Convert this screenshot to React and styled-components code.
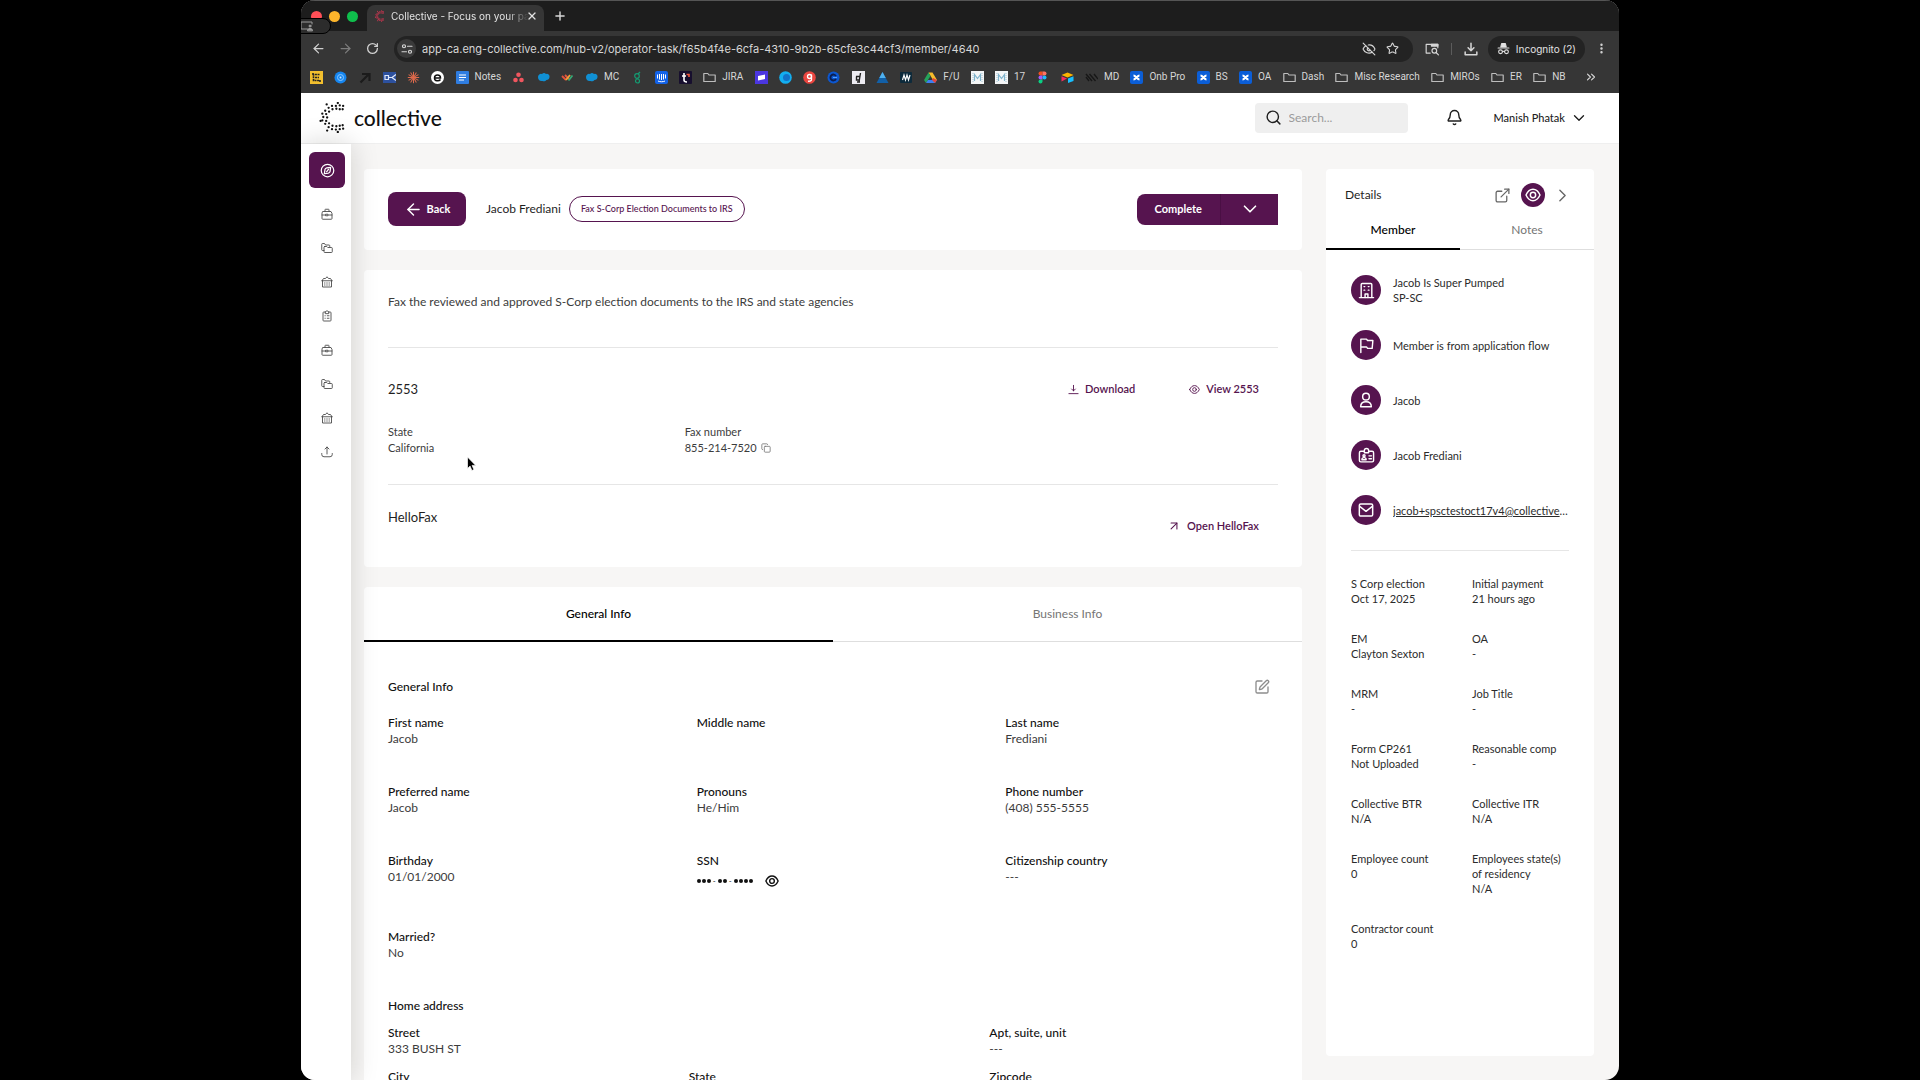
import React, { useState } from "react";
import styled, { createGlobalStyle } from "styled-components";
import {
  ArrowLeft,
  ArrowRight,
  ArrowUpRight,
  Bell,
  ChevronDown,
  ChevronRight,
  ChevronsRight,
  Copy,
  EllipsisVertical,
  ExternalLink,
  EyeOff,
  Plus,
  RotateCw,
  Search,
  SquarePen,
  Star,
  X,
} from "lucide-react";

const PURPLE = "#56144f";

const GlobalStyle = createGlobalStyle`
  * {
    box-sizing: border-box;
  }

  body {
    margin: 0;
    background: #000;
    color: #1f1f1f;
    font-family: Lato, "Liberation Sans", sans-serif;
    font-size: 12px;
    line-height: 16px;
  }

  button,
  input {
    margin: 0;
    padding: 0;
    border: 0;
    background: none;
    color: inherit;
    font: inherit;
  }

  button {
    display: flex;
    align-items: center;
    cursor: pointer;
  }

  a {
    color: inherit;
    text-decoration: none;
  }

  svg {
    display: block;
    flex: none;
  }

  h1, h2, h3, p, dl, dd {
    margin: 0;
    font-size: inherit;
    font-weight: inherit;
  }
`;

const Desktop = styled.div`
  height: 100vh;
  padding: 0 301px;
  overflow: hidden;
`;

const Window = styled.div`
  position: relative;
  display: flex;
  flex-direction: column;
  height: 100%;
  border-radius: 14px;
  overflow: hidden;
  background: #f7f6f5;
`;

/* browser chrome */

const Chrome = styled.div`
  background: #363636;
  color: #d6d6d6;
  font-family: Inter, "Liberation Sans", sans-serif;
  font-size: 10px;
`;

const TabStrip = styled.div`
  display: flex;
  align-items: flex-end;
  height: 31px;
  padding-left: 10px;
  border-top: 1px solid #555;
  background: #1d1d1d;
`;

const Lights = styled.div`
  display: flex;
  align-items: center;
  gap: 7px;
  height: 30px;
  width: 56px;
`;

const Light = styled.span`
  width: 11px;
  height: 11px;
  border-radius: 50%;
  background: ${(p) => p.$color};
`;

const BrowserTab = styled.div`
  display: flex;
  align-items: center;
  width: 177px;
  height: 26px;
  padding: 0 6px 5px 8px;
  border-radius: 8px 8px 0 0;
  background: #363636;
  color: #e2e2e2;
`;

const TabTitle = styled.span`
  flex: 1;
  min-width: 0;
  margin: 0 -3px 0 7px;
  white-space: nowrap;
  mask-image: linear-gradient(to right, #000 84%, transparent);
`;

const NewTab = styled.button`
  height: 26px;
  margin-left: 9px;
  padding-bottom: 5px;
`;

const Toolbar = styled.div`
  display: flex;
  align-items: center;
  height: 35px;
  padding: 0 11px 0 10px;
`;

const NavButton = styled.button`
  justify-content: center;
  width: 14px;
  margin-right: 13px;
  color: ${(p) => (p.$dim ? "#7c7c7c" : "#cfcfcf")};
`;

const AddressBar = styled.div`
  display: flex;
  align-items: center;
  flex: 1;
  gap: 10px;
  height: 26px;
  margin-left: 2px;
  padding: 0 14px 0 3px;
  border-radius: 13px;
  background: #232323;
`;

const SiteInfo = styled.button`
  justify-content: center;
  width: 19px;
  height: 19px;
  border-radius: 50%;
  background: #3a3a3a;
`;

const Address = styled.input`
  flex: 1;
  min-width: 0;
  margin-left: -4px;
  outline: none;
  font-size: 11px;
`;

const ToolButtons = styled.div`
  display: flex;
  align-items: center;
  gap: 12px;
  margin-left: 12px;
`;

const ToolDivider = styled.span`
  width: 1px;
  height: 12px;
  background: #5c5c5c;
`;

const Incognito = styled.button`
  gap: 6px;
  height: 26px;
  margin: 0 -2px;
  padding: 0 9px;
  border-radius: 13px;
  background: #232323;
  color: #e2e2e2;
`;

const Bookmarks = styled.div`
  display: flex;
  align-items: center;
  height: 27px;
  padding: 0 21px 5px 9px;
  font-family: Roboto, "Liberation Sans", sans-serif;
`;

const BookmarkList = styled.div`
  display: flex;
  align-items: center;
  justify-content: space-between;
  flex: 1;
  margin-right: 18px;
`;

const Bookmark = styled.a`
  display: flex;
  align-items: center;
  gap: 6px;
  white-space: nowrap;
`;

/* app */

const Header = styled.header`
  display: flex;
  align-items: center;
  height: 51px;
  padding: 0 31px 1px 18px;
  border-bottom: 1px solid #efefef;
  background: #fff;
`;

const Brand = styled.a`
  display: flex;
  align-items: center;
  gap: 9px;
  margin-right: auto;
  color: #111;
  font-size: 21px;
  font-weight: 500;
`;

const SearchBox = styled.label`
  display: flex;
  align-items: center;
  gap: 7px;
  width: 153px;
  height: 30px;
  padding: 0 10px;
  border-radius: 4px;
  background: #efefef;

  input {
    width: 100%;
    min-width: 0;
    outline: none;
    font-size: 12px;
  }

  input::placeholder {
    color: #9b9b9b;
  }
`;

const BellButton = styled.button`
  margin: 0 31px 0 38px;
`;

const UserMenu = styled.button`
  gap: 5px;
  font-size: 11px;
  font-weight: 500;
`;

const Body = styled.div`
  display: flex;
  flex: 1;
  min-height: 0;
`;

const SideNav = styled.nav`
  position: relative;
  z-index: 1;
  display: flex;
  flex-direction: column;
  align-items: center;
  width: 50px;
  padding: 8px 0 8px 2px;
  background: #fff;
  box-shadow: 0 0 28px rgba(20, 20, 0, 0.17);
`;

const NavLink = styled.a`
  display: flex;
  align-items: center;
  justify-content: center;
  width: 34px;
  height: 34px;
  color: #4b4b4b;
`;

const ActiveNavLink = styled(NavLink)`
  width: 36px;
  height: 36px;
  margin-bottom: 9px;
  border-radius: 6px;
  background: ${PURPLE};
  color: #fff;
`;

const Content = styled.div`
  display: flex;
  align-items: flex-start;
  flex: 1;
  gap: 24px;
  min-width: 0;
  padding: 25px 25px 0 13px;
  overflow: hidden;
`;

const Main = styled.main`
  display: flex;
  flex-direction: column;
  flex: 1;
  gap: 20px;
  min-width: 0;
`;

const Card = styled.section`
  border-radius: 4px;
  background: #fff;
`;

const TaskBar = styled(Card)`
  display: flex;
  align-items: center;
  height: 81px;
  padding: 0 24px 1px;
`;

const BackButton = styled.button`
  justify-content: center;
  gap: 4px;
  width: 78px;
  height: 34px;
  margin-right: 20px;
  border-radius: 8px;
  background: ${PURPLE};
  color: #fff;
  font-size: 11px;
  font-weight: 700;
`;

const TaskTag = styled.span`
  margin: 0 auto 0 8px;
  padding: 4px 11px;
  border: 1px solid ${PURPLE};
  border-radius: 13px;
  color: ${PURPLE};
  font-size: 9px;
  font-weight: 500;
`;

const SplitButton = styled.div`
  display: flex;
  height: 31px;
  border-radius: 8px 0 0 8px;
  overflow: hidden;
  background: ${PURPLE};
  color: #fff;
`;

const CompleteButton = styled.button`
  padding: 0 18px;
  border-right: 1px solid #4a0f44;
  font-size: 11px;
  font-weight: 700;
`;

const MoreButton = styled.button`
  justify-content: center;
  width: 57px;
`;

const TaskCard = styled(Card)`
  padding: 0 24px;
  color: #3c3c3c;
`;

const TaskSection = styled.div`
  min-height: ${(p) => p.$height}px;
  padding-top: 24px;

  & + & {
    border-top: 1px solid #e6e6e6;
  }
`;

const SectionHead = styled.div`
  display: flex;
  align-items: ${(p) => p.$align || "center"};
  justify-content: space-between;
  color: #1f1f1f;
  font-size: 13px;
`;

const Actions = styled.div`
  display: flex;
  gap: 16px;
`;

const TextButton = styled.button`
  gap: 6px;
  padding: 9px 19px;
  color: ${PURPLE};
  font-size: 11px;
  font-weight: 600;
`;

const FaxGrid = styled.dl`
  display: grid;
  grid-template-columns: repeat(3, 1fr);
  margin-top: 18px;
  font-size: 11px;
`;

const FaxNumber = styled.dd`
  display: flex;
  align-items: center;
  gap: 4px;
`;

const Tabs = styled.div`
  display: flex;
  border-bottom: 1px solid #dedede;
`;

const Tab = styled.button`
  flex: 1;
  justify-content: center;
  height: ${(p) => p.$height}px;
  margin-bottom: -1px;
  border-bottom: 2px solid ${(p) => (p.$active ? "#000" : "transparent")};
  color: ${(p) => (p.$active ? "#000" : "#757575")};
  font-weight: ${(p) => (p.$active ? 500 : 400)};
`;

const PanelTab = styled(Tab)`
  padding-bottom: 3px;
`;

const InfoBody = styled.div`
  padding: 37px 24px 0;
`;

const InfoHead = styled.div`
  display: flex;
  align-items: center;
  justify-content: space-between;
  padding-right: 8px;
  margin-bottom: 20px;
  color: #111;
  font-weight: 500;
`;

const FieldGrid = styled.dl`
  display: grid;
  grid-template-columns: repeat(3, 1fr);
  gap: ${(p) => p.$gap};

  dt {
    color: #111;
    font-weight: 500;
  }

  dd {
    min-height: 16px;
    color: #3c3c3c;
  }
`;

const AddressTitle = styled.h3`
  margin: 37px 0 11px;
  color: #111;
  font-weight: 500;
`;

const Ssn = styled.span`
  display: flex;
  align-items: center;
  gap: 12px;
  height: 23px;
  color: #111;
`;

const Dots = styled.span`
  display: flex;
  align-items: center;
  gap: 2px;
  font-size: 8px;
`;

const DotGroup = styled.span`
  display: flex;
  gap: 1px;
`;

const Dot = styled.i`
  width: 4px;
  height: 4px;
  border-radius: 50%;
  background: #111;
`;

const Details = styled.aside`
  display: flex;
  flex-direction: column;
  align-self: stretch;
  width: 268px;
  margin-bottom: 24px;
  border-radius: 4px;
  background: #fff;
  color: #2b2b2b;
`;

const DetailsHead = styled.div`
  display: flex;
  align-items: center;
  height: 45px;
  padding: 7px 21px 0 19px;
  color: #1f1f1f;
`;

const DetailsTitle = styled.h2`
  flex: 1;
`;

const IconButton = styled.button`
  color: #666;
`;

const RoundButton = styled.button`
  justify-content: center;
  width: 24px;
  height: 24px;
  margin: 0 7px 0 10px;
  border-radius: 50%;
  background: ${PURPLE};
  color: #fff;
`;

const People = styled.ul`
  display: flex;
  flex-direction: column;
  gap: 25px;
  margin: 0 25px;
  padding: 25px 0;
  border-bottom: 1px solid #e6e6e6;
  list-style: none;
  font-size: 11px;
  line-height: 15px;
`;

const Person = styled.li`
  display: flex;
  align-items: center;
  gap: 12px;
  height: 30px;
`;

const Badge = styled.span`
  display: flex;
  align-items: center;
  justify-content: center;
  flex: none;
  width: 30px;
  height: 30px;
  border-radius: 50%;
  background: ${PURPLE};
  color: #fff;
`;

const Email = styled.a`
  overflow: hidden;
  text-overflow: ellipsis;
  white-space: nowrap;
  text-decoration: underline;
`;

const Facts = styled.dl`
  display: grid;
  grid-template-columns: 1fr 1fr;
  gap: 25px 24px;
  padding: 25px;
  font-size: 11px;
  line-height: 15px;
`;

/* overlays */

const ShareBadge = styled.div`
  position: absolute;
  top: 18px;
  left: -10px;
  display: flex;
  align-items: center;
  justify-content: flex-end;
  width: 40px;
  height: 16px;
  padding-right: 17px;
  border: 1px solid #000;
  border-radius: 8px;
  background: #2c2c2c;
  color: #9b9b9b;
`;

const Cursor = styled.svg`
  position: absolute;
  top: 456px;
  left: 165px;
  z-index: 2;
`;

/* drawings */

const Glyph = ({ size = 12, sw = 2, children }) => (
  <svg
    width={size}
    height={size}
    viewBox="0 0 24 24"
    fill="none"
    stroke="currentColor"
    strokeWidth={sw}
    strokeLinecap="round"
    strokeLinejoin="round"
  >
    {children}
  </svg>
);

const LOGO_DOTS = [
  [19, 1], [7.5, 2.5], [13, 4], [17, 4], [21, 3.5], [24.5, 4],
  [9.5, 6], [13.5, 7.5], [17.5, 7], [21, 7.5], [24, 7.5],
  [6, 9], [10, 10], [3, 12], [7, 12.5], [4, 15.5], [8, 16],
  [3, 19], [7, 19.5], [1.2, 19.5], [6, 22.5], [10, 22],
  [9.5, 26], [13.5, 24.5], [17.5, 25], [21, 24.5], [24, 24],
  [13, 28], [17, 28.5], [21, 28], [24.5, 27.5], [8, 29.5], [19, 31],
];

const LogoMark = ({ size, color, dot }) => (
  <svg width={size - 5} height={size} viewBox="0 0 26 32">
    {LOGO_DOTS.map(([x, y]) => (
      <circle key={x + "-" + y} cx={x} cy={y} r={dot} fill={color} />
    ))}
  </svg>
);

const EyeIcon = ({ size, sw }) => (
  <Glyph size={size} sw={sw}>
    <path d="M1.5 12C4 6.500 7.500 3.500 12 3.500s8 3 10.500 8.500C20 17.500 16.500 20.500 12 20.500S4 17.500 1.500 12z" />
    <circle cx="12" cy="12" r="4" />
  </Glyph>
);

const DownloadIcon = ({ size, sw }) => (
  <Glyph size={size} sw={sw}>
    <path d="M12 3v12M8 11l4 4 4-4M2 21h20" />
  </Glyph>
);

const CompassIcon = () => (
  <Glyph size={15} sw={2}>
    <circle cx="12" cy="12" r="10" />
    <path d="M17 7l-1 7c-1 2-5 3-9 3l1-7c1-2 5-3 9-3z" />
    <path d="M13.500 10l-3 4" />
  </Glyph>
);

const CaseIcon = () => (
  <Glyph size={12} sw={1.8}>
    <path d="M8 7V3.500a1 1 0 0 1 1-1h6a1 1 0 0 1 1 1V7" />
    <path d="M4 7h16l2 4v10a1.500 1.500 0 0 1-1.500 1.500h-17A1.500 1.500 0 0 1 2 21V11z" />
    <path d="M2 14h7M15 14h7M10 12.500h4v3h-4z" />
  </Glyph>
);

const FoldersIcon = () => (
  <Glyph size={12} sw={1.8}>
    <path d="M6 17H3a1.500 1.500 0 0 1-1.500-1.500v-11A1.500 1.500 0 0 1 3 3h4l2 3h7a1.500 1.500 0 0 1 1.500 1.500V9" />
    <path d="M7.500 9h4l2 2h7.500a1.500 1.500 0 0 1 1.500 1.500v7A1.500 1.500 0 0 1 21 21H7.500A1.500 1.500 0 0 1 6 19.500v-9A1.500 1.500 0 0 1 7.500 9z" />
  </Glyph>
);

const BankIcon = () => (
  <Glyph size={12} sw={1.8}>
    <path d="M2 9.500l3-4.500h4l3-3.500 3 3.500h4l3 4.500M2 9.500h20M3 9.500V22h18V9.500" />
    <path d="M7 14h1M11.500 14h1M16 14h1M7 18h1M11.500 18h1M16 18h1" />
  </Glyph>
);

const ClipboardIcon = () => (
  <Glyph size={12} sw={1.8}>
    <path d="M8.500 4h-3A1.500 1.500 0 0 0 4 5.500v15A1.500 1.500 0 0 0 5.500 22h13a1.500 1.500 0 0 0 1.500-1.500v-15A1.500 1.500 0 0 0 18.500 4h-3" />
    <path d="M8.500 6.500v-3l3.500-2 3.500 2v3zM8 11.500h.5M8 16.500h.5M12.500 11.500H16M12.500 16.500H16" />
  </Glyph>
);

const UploadIcon = () => (
  <Glyph size={12} sw={1.8}>
    <path d="M12 16V2M8 6l4-4 4 4M1.500 15v2A4.500 4.500 0 0 0 6 21.500h12a4.500 4.500 0 0 0 4.500-4.500v-2" />
  </Glyph>
);

const BuildingIcon = () => (
  <Glyph size={17} sw={2}>
    <path d="M2 22h20M4.500 22V3.500A1.500 1.500 0 0 1 6 2h12a1.500 1.500 0 0 1 1.500 1.500V22" />
    <path d="M10 22v-5h4v5M8.500 6.500h1M14.500 6.500h1M8.500 11.500h1M14.500 11.500h1" />
  </Glyph>
);

const FlagIcon = () => (
  <Glyph size={17} sw={2}>
    <path d="M4 22V3h8l1.500 2H21l-1 11h-6.500L12 14H4" />
  </Glyph>
);

const PersonIcon = () => (
  <Glyph size={16} sw={2.2}>
    <circle cx="12" cy="7" r="5" />
    <path d="M4 22c0-5 3-7.500 8-7.500s8 2.500 8 7.500z" />
  </Glyph>
);

const IdIcon = () => (
  <Glyph size={17} sw={2}>
    <path d="M9 6H4a2 2 0 0 0-2 2v11a2 2 0 0 0 2 2h16a2 2 0 0 0 2-2V8a2 2 0 0 0-2-2h-5" />
    <path d="M9 8V5a3 3 0 0 1 6 0v3zM15.500 12.500H19M15.500 16.500H19M5.500 18c0-2 1-3 3-3s3 1 3 3z" />
    <circle cx="8.5" cy="12.5" r="1.5" />
  </Glyph>
);

const MailIcon = () => (
  <Glyph size={16} sw={2.2}>
    <rect x="2" y="3" width="20" height="18" rx="2" />
    <path d="M2.500 6.500L12 14l9.500-7.500" />
  </Glyph>
);

const Mark = ({ children }) => (
  <svg width="13" height="13" viewBox="0 0 13 13" fill="none">
    {children}
  </svg>
);

const Cloud = () => (
  <Mark>
    <path d="M1 6a3 3 0 0 1 4-3 3 3 0 0 1 4 0 2.600 2.600 0 0 1 3.500 3c0 2-1.500 3-3 3-1 1.500-3 1.500-4 1C3 10.500 1 9 1 6z" fill="#1090d4" />
  </Mark>
);

const Folder = () => (
  <Mark>
    <path d="M.8 10.500v-8h4l1.200 1.500h6.200v6.500z" stroke="#bdbdbd" strokeWidth="1.2" strokeLinejoin="round" />
  </Mark>
);

const Cross = () => (
  <Mark>
    <rect width="13" height="13" rx="2" fill="#0b5ed7" />
    <path d="M3.500 4.500c2 0 4 4 6 4M9.500 4.500c-2 0-4 4-6 4" stroke="#fff" strokeWidth="2.2" />
  </Mark>
);

const Mask = () => (
  <Mark>
    <rect width="13" height="13" fill="#f4f6f7" />
    <path d="M3.500 10V3.500l3 4 3-4V10" stroke="#7fb3cc" strokeWidth="1.2" />
    <path d="M2 2v9M11 2v9" stroke="#a3c4d4" strokeDasharray="1 1" />
  </Mark>
);

const RAYS = [0, 30, 60, 90, 120, 150];

const BOOKMARKS = [
  [<Mark><rect width="13" height="13" fill="#f2bf2e" /><path d="M9.500 3.500h-6v6h6M5 6.500h4M3 2v2M10 9v2" stroke="#222" strokeWidth="1.6" strokeDasharray="2 .6" /></Mark>],
  [<Mark><circle cx="6.5" cy="6.5" r="6" fill="#1686f0" /><circle cx="6.5" cy="6.5" r="3" stroke="#8cc8ff" /><circle cx="6.5" cy="6.5" r="1" fill="#cfe8ff" /></Mark>],
  [<Mark><path d="M1.500 11.500L10 3M3 3h7.500v7" stroke="#1b1b1b" strokeWidth="2.2" /></Mark>],
  [<Mark><rect y="1" width="13" height="11" fill="#2d519e" /><path d="M2 4.500h3.500v4H2zM6 6.500h3M13 3.500L9 6.500l4 3" stroke="#dfe8fa" strokeWidth="1.2" /></Mark>],
  [<Mark>{RAYS.map((a) => <path key={a} d="M6.500.8v11.400" stroke="#e06a4c" transform={`rotate(${a} 6.5 6.5)`} />)}</Mark>],
  [<Mark><circle cx="6.5" cy="6.5" r="6.5" fill="#fff" /><path d="M3.500 7h6c0-4-6-4-6 0 0 3.500 4.500 3.500 6 1.500" stroke="#111" strokeWidth="1.5" /></Mark>],
  [<Mark><rect width="13" height="13" rx="1" fill="#2f7de1" /><path d="M3 4h7M3 6.500h7M3 9h5" stroke="#fff" strokeWidth="1.2" /></Mark>, "Notes"],
  [<Mark><circle cx="6.5" cy="3.8" r="2.3" fill="#f0565f" /><circle cx="3.5" cy="9" r="2.3" fill="#f0565f" /><circle cx="9.5" cy="9" r="2.3" fill="#f0565f" /></Mark>],
  [<Cloud />],
  [<Mark><path d="M1 5l4 4M4 4l4 4" stroke="#e5533c" strokeWidth="1.8" /><path d="M5 9l4-5" stroke="#f2a33a" strokeWidth="1.8" /><path d="M7.500 9.500l4-5" stroke="#35a976" strokeWidth="1.8" /></Mark>],
  [<Cloud />, "MC"],
  [<Mark><circle cx="6" cy="5" r="2.3" stroke="#149c72" strokeWidth="1.2" /><circle cx="6.5" cy="10" r="2" stroke="#149c72" strokeWidth="1.2" /><path d="M7 3l2-2" stroke="#149c72" strokeWidth="1.2" /></Mark>],
  [<Mark><rect width="13" height="13" rx="2" fill="#1262e8" /><path d="M2.500 3.500v4M4.500 3v5.500M6.500 3v6M8.500 3v5.500M10.500 3.500v4M3 10c2 1 5 1 7 0" stroke="#fff" /></Mark>],
  [<Mark><rect width="13" height="13" rx="1" fill="#170f2e" /><path d="M5 2v7q0 2 3 2M3 5h4" stroke="#fff" strokeWidth="1.6" /><path d="M7.500 3.500H10V6" stroke="#f0563d" strokeWidth="1.6" /></Mark>],
  [<Folder />, "JIRA"],
  [<Mark><rect width="13" height="13" fill="#4b36e0" /><path d="M3 5l7-1.500V8L3 9.500z" fill="#fff" /></Mark>],
  [<Mark><circle cx="6.5" cy="6.5" r="6.3" fill="#13aef0" /><circle cx="7.5" cy="6.5" r="3.5" fill="#1272c9" /></Mark>],
  [<Mark><circle cx="6.5" cy="6.5" r="6.3" fill="#ea4640" /><circle cx="6.5" cy="5.5" r="2" stroke="#fff" strokeWidth="1.3" /><path d="M8.500 3.500v5q0 2-3.500 1.700" stroke="#fff" strokeWidth="1.3" /></Mark>],
  [<Mark><circle cx="6.5" cy="6.5" r="6" fill="#0c57d0" /><path d="M9 5a3 3 0 1 0 0 3" stroke="#0b1e4f" strokeWidth="1.8" /><path d="M6 6.500h4" stroke="#52a0ff" /></Mark>],
  [<Mark><rect width="13" height="13" fill="#ecebf1" /><path d="M8.500 2L7 11M4 5.500h4M4.500 5.500V9h3M5 11h3" stroke="#222" strokeWidth="1.4" /></Mark>],
  [<Mark><path d="M6.500 1L12.500 12H.5z" fill="#1260a8" /><path d="M6.500 1L9.800 7H3.200z" fill="#4fb0ee" /></Mark>],
  [<Mark><rect y="1" width="12" height="11" rx="1" fill="#0d2a3b" /><path d="M2.500 9L4 4l1.500 5L7 4l1.500 5L10 4" stroke="#fff" strokeWidth="1.2" /></Mark>],
  [<Mark><path d="M4.500 1.500h4L13 9H9z" fill="#f5bc2b" /><path d="M4.500 1.500L0 9l2 3 4.500-7z" fill="#25a35a" /><path d="M2 12l2-3h9l-2 3z" fill="#3c7ff0" /><path d="M9 7l4 2-2 3-3-3z" fill="#e4453a" /></Mark>, "F/U"],
  [<Mask />],
  [<Mask />, "17"],
  [<Mark><path d="M6.500.5h-2a2 2 0 0 0 0 4h2z" fill="#f24e1e" /><path d="M6.500.5h2a2 2 0 0 1 0 4h-2z" fill="#ff7262" /><path d="M6.500 4.500h-2a2 2 0 0 0 0 4h2z" fill="#a259ff" /><circle cx="8.5" cy="6.5" r="2" fill="#1abcfe" /><path d="M6.500 8.500h-2a2 2 0 1 0 2 2z" fill="#0acf83" /></Mark>],
  [<Mark><path d="M.5 4L6.500 1.500l6 2.500-6 2.500z" fill="#fcb400" /><path d="M7 7.500l5.500-2.300V10L7 12z" fill="#18bfff" /><path d="M.5 5.200L6 7.500.5 10.500z" fill="#f82b60" /></Mark>],
  [<Mark><path d="M1 3l6 7M4.500 3l6 7M9 3l4 5M1 6l3 4" stroke="#171717" strokeWidth="1.4" /></Mark>, "MD"],
  [<Cross />, "Onb Pro"],
  [<Cross />, "BS"],
  [<Cross />, "OA"],
  [<Folder />, "Dash"],
  [<Folder />, "Misc Research"],
  [<Folder />, "MIROs"],
  [<Folder />, "ER"],
  [<Folder />, "NB"],
];

const NAV_ITEMS = [
  [CaseIcon, "Tasks"],
  [FoldersIcon, "Folders"],
  [BankIcon, "Businesses"],
  [ClipboardIcon, "Reports"],
  [CaseIcon, "Jobs"],
  [FoldersIcon, "Documents"],
  [BankIcon, "Banks"],
  [UploadIcon, "Upload"],
];

const MEMBER = [
  [BuildingIcon, <>Jacob Is Super Pumped<br />SP-SC</>],
  [FlagIcon, "Member is from application flow"],
  [PersonIcon, "Jacob"],
  [IdIcon, "Jacob Frediani"],
];

const FACTS = [
  ["S Corp election", "Oct 17, 2025"],
  ["Initial payment", "21 hours ago"],
  ["EM", "Clayton Sexton"],
  ["OA", "-"],
  ["MRM", "-"],
  ["Job Title", "-"],
  ["Form CP261", "Not Uploaded"],
  ["Reasonable comp", "-"],
  ["Collective BTR", "N/A"],
  ["Collective ITR", "N/A"],
  ["Employee count", "0"],
  ["Employees state(s) of residency", "N/A"],
  ["Contractor count", "0"],
];

const MaskedSsn = () => (
  <Ssn>
    <Dots>
      {[3, 2, 4].map((count, i) => (
        <React.Fragment key={i}>
          {i > 0 && "-"}
          <DotGroup>
            {Array.from({ length: count }, (_, n) => (
              <Dot key={n} />
            ))}
          </DotGroup>
        </React.Fragment>
      ))}
    </Dots>
    <button aria-label="Show SSN">
      <EyeIcon size={14} sw={2.4} />
    </button>
  </Ssn>
);

const GENERAL = [
  ["First name", "Jacob"],
  ["Middle name", ""],
  ["Last name", "Frediani"],
  ["Preferred name", "Jacob"],
  ["Pronouns", "He/Him"],
  ["Phone number", "(408) 555-5555"],
  ["Birthday", "01/01/2000"],
  ["SSN", <MaskedSsn />],
  ["Citizenship country", "---"],
  ["Married?", "No"],
];

const HOME = [
  ["Street", "333 BUSH ST"],
  null,
  ["Apt, suite, unit", "---"],
  ["City", ""],
  ["State", ""],
  ["Zipcode", ""],
];

const Fields = ({ items, gap }) => (
  <FieldGrid $gap={gap}>
    {items.map((item, i) => (
      <div key={i}>
        {item && (
          <>
            <dt>{item[0]}</dt>
            <dd>{item[1]}</dd>
          </>
        )}
      </div>
    ))}
  </FieldGrid>
);

function BrowserChrome() {
  return (
    <Chrome>
      <TabStrip>
        <Lights>
          <Light $color="#ff4f57" />
          <Light $color="#fdb52b" />
          <Light $color="#0fbf4c" />
        </Lights>
        <BrowserTab>
          <LogoMark size={14} color="#c93650" dot={1.7} />
          <TabTitle>Collective - Focus on your pa</TabTitle>
          <button aria-label="Close tab">
            <X size={12} strokeWidth={2.5} />
          </button>
        </BrowserTab>
        <NewTab aria-label="New tab">
          <Plus size={14} strokeWidth={2.5} />
        </NewTab>
      </TabStrip>
      <Toolbar>
        <NavButton aria-label="Back">
          <ArrowLeft size={15} />
        </NavButton>
        <NavButton $dim aria-label="Forward">
          <ArrowRight size={15} />
        </NavButton>
        <NavButton aria-label="Reload">
          <RotateCw size={13} strokeWidth={2.4} />
        </NavButton>
        <AddressBar>
          <SiteInfo aria-label="Site information">
            <Glyph size={12} sw={2.4}>
              <circle cx="6" cy="6.5" r="3" />
              <path d="M13 6.500h9M2 17.500h9" />
              <circle cx="18" cy="17.5" r="3" />
            </Glyph>
          </SiteInfo>
          <Address
            aria-label="Address"
            readOnly
            value="app-ca.eng-collective.com/hub-v2/operator-task/f65b4f4e-6cfa-4310-9b2b-65cfe3c44cf3/member/4640"
          />
          <EyeOff size={14} />
          <Star size={13} />
        </AddressBar>
        <ToolButtons>
          <Glyph size={14} sw={2}>
            <path d="M9 19H2V4h20v6" />
            <path d="M11 4h11v3H11z" fill="currentColor" />
            <circle cx="16" cy="15" r="4" />
            <path d="M19 18l4 4" />
          </Glyph>
          <ToolDivider />
          <Glyph size={14} sw={2.6}>
            <path d="M12 2v13M7 10l5 5 5-5M2 17v5h20v-5" />
          </Glyph>
          <Incognito>
            <Glyph size={13} sw={2}>
              <path d="M7 9l1.500-6h7L17 9z" fill="currentColor" />
              <path d="M2 11h20M10 18c1-1 3-1 4 0" />
              <circle cx="6.5" cy="18" r="3.5" />
              <circle cx="17.5" cy="18" r="3.5" />
            </Glyph>
            Incognito (2)
          </Incognito>
          <EllipsisVertical size={13} strokeWidth={2.5} />
        </ToolButtons>
      </Toolbar>
      <Bookmarks>
        <BookmarkList>
          {BOOKMARKS.map(([icon, label], i) => (
            <Bookmark key={i} href="#">
              {icon}
              {label}
            </Bookmark>
          ))}
        </BookmarkList>
        <ChevronsRight size={14} />
      </Bookmarks>
    </Chrome>
  );
}

function DetailsPanel() {
  const [tab, setTab] = useState("Member");

  return (
    <Details>
      <DetailsHead>
        <DetailsTitle>Details</DetailsTitle>
        <IconButton aria-label="Open in new window">
          <ExternalLink size={17} strokeWidth={1.8} />
        </IconButton>
        <RoundButton aria-label="Toggle visibility">
          <EyeIcon size={16} sw={2.2} />
        </RoundButton>
        <IconButton aria-label="Collapse">
          <ChevronRight size={21} strokeWidth={1.6} />
        </IconButton>
      </DetailsHead>
      <Tabs>
        {["Member", "Notes"].map((name) => (
          <PanelTab
            key={name}
            $height={36}
            $active={tab === name}
            onClick={() => setTab(name)}
          >
            {name}
          </PanelTab>
        ))}
      </Tabs>
      <People>
        {MEMBER.map(([Icon, text], i) => (
          <Person key={i}>
            <Badge>
              <Icon />
            </Badge>
            <span>{text}</span>
          </Person>
        ))}
        <Person>
          <Badge>
            <MailIcon />
          </Badge>
          <Email href="mailto:jacob+spsctestoct17v4@collective.com">
            jacob+spsctestoct17v4@collective.com
          </Email>
        </Person>
      </People>
      <Facts>
        {FACTS.map(([label, value]) => (
          <div key={label}>
            <dt>{label}</dt>
            <dd>{value}</dd>
          </div>
        ))}
      </Facts>
    </Details>
  );
}

function App() {
  const [tab, setTab] = useState("General Info");

  return (
    <>
      <GlobalStyle />
      <Desktop>
        <Window>
          <BrowserChrome />
          <Header>
            <Brand href="#">
              <LogoMark size={31} color="#111" dot={1.2} />
              collective
            </Brand>
            <SearchBox>
              <Search size={17} />
              <input type="text" placeholder="Search..." aria-label="Search" />
            </SearchBox>
            <BellButton aria-label="Notifications">
              <Bell size={17} />
            </BellButton>
            <UserMenu>
              Manish Phatak
              <ChevronDown size={18} strokeWidth={1.8} />
            </UserMenu>
          </Header>
          <Body>
            <SideNav>
              <ActiveNavLink href="#" aria-label="Home">
                <CompassIcon />
              </ActiveNavLink>
              {NAV_ITEMS.map(([Icon, label]) => (
                <NavLink key={label} href="#" aria-label={label}>
                  <Icon />
                </NavLink>
              ))}
            </SideNav>
            <Content>
              <Main>
                <TaskBar>
                  <BackButton>
                    <ArrowLeft size={19} strokeWidth={1.8} />
                    Back
                  </BackButton>
                  <h1>Jacob Frediani</h1>
                  <TaskTag>Fax S-Corp Election Documents to IRS</TaskTag>
                  <SplitButton>
                    <CompleteButton>Complete</CompleteButton>
                    <MoreButton aria-label="More actions">
                      <ChevronDown size={22} strokeWidth={1.8} />
                    </MoreButton>
                  </SplitButton>
                </TaskBar>
                <TaskCard>
                  <TaskSection $height={77}>
                    <p>
                      Fax the reviewed and approved S-Corp election documents to
                      the IRS and state agencies
                    </p>
                  </TaskSection>
                  <TaskSection $height={137}>
                    <SectionHead>
                      <h2>2553</h2>
                      <Actions>
                        <TextButton>
                          <DownloadIcon size={11} sw={2} />
                          Download
                        </TextButton>
                        <TextButton>
                          <EyeIcon size={11} sw={2} />
                          View 2553
                        </TextButton>
                      </Actions>
                    </SectionHead>
                    <FaxGrid>
                      <div>
                        <dt>State</dt>
                        <dd>California</dd>
                      </div>
                      <div>
                        <dt>Fax number</dt>
                        <FaxNumber>
                          855-214-7520
                          <button aria-label="Copy fax number">
                            <Copy size={10} color="#777" />
                          </button>
                        </FaxNumber>
                      </div>
                    </FaxGrid>
                  </TaskSection>
                  <TaskSection $height={83}>
                    <SectionHead $align="flex-start">
                      <h2>HelloFax</h2>
                      <TextButton>
                        <ArrowUpRight size={14} strokeWidth={1.8} />
                        Open HelloFax
                      </TextButton>
                    </SectionHead>
                  </TaskSection>
                </TaskCard>
                <Card>
                  <Tabs>
                    {["General Info", "Business Info"].map((name) => (
                      <Tab
                        key={name}
                        $height={55}
                        $active={tab === name}
                        onClick={() => setTab(name)}
                      >
                        {name}
                      </Tab>
                    ))}
                  </Tabs>
                  <InfoBody>
                    <InfoHead>
                      <h2>General Info</h2>
                      <button aria-label="Edit general info">
                        <SquarePen size={16} color="#8d8d8d" />
                      </button>
                    </InfoHead>
                    <Fields items={GENERAL} gap="37px 36px" />
                    <AddressTitle>Home address</AddressTitle>
                    <Fields items={HOME} gap="12px" />
                  </InfoBody>
                </Card>
              </Main>
              <DetailsPanel />
            </Content>
          </Body>
          <ShareBadge>
            <Glyph size={12} sw={2}>
              <path d="M13 18H0V4h22v4" />
              <circle cx="18" cy="12" r="2" fill="currentColor" />
              <path d="M13 21c0-6 10-6 10 0z" fill="currentColor" />
            </Glyph>
          </ShareBadge>
          <Cursor width="12" height="16" viewBox="0 0 12 16">
            <path
              d="M1.500 1v11.500l2.600-2.400 1.800 4.400 2-.9-1.800-4.200h3.600z"
              fill="#000"
              stroke="#fff"
              strokeWidth=".7"
            />
          </Cursor>
        </Window>
      </Desktop>
    </>
  );
}

export default App;
